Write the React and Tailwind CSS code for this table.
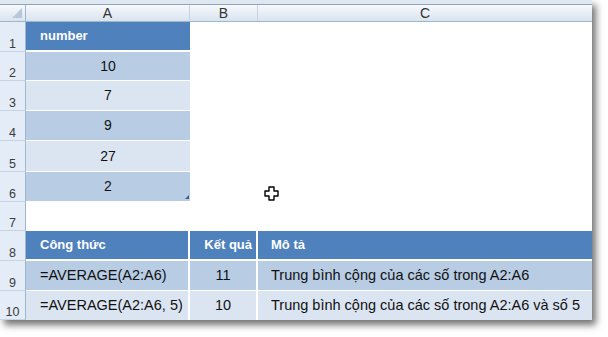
import React from "react";

const font = { fontFamily: '"Liberation Sans", Arial, sans-serif' };

const heights = [30, 29, 30, 30, 31, 30, 29, 30, 30, 29];

function RowHead({ n, h }) {
  return (
    <div
      className="flex items-end justify-center border-r border-b border-r-[#9eb6ce] border-b-[#c5d3e3] bg-[#e4ecf7] pb-[1px] text-[12.5px] leading-none text-[#3b3b3b]"
      style={{ height: h }}
    >
      {n}
    </div>
  );
}

export default function App() {
  const dark = "bg-[#b8cce4]";
  const light = "bg-[#dbe5f1]";
  const vals = ["10", "7", "9", "27", "2"];
  return (
    <div className="relative h-[337px] w-[608px] bg-white" style={font}>
      <div className="w-[592px] bg-white shadow-[4px_5px_7px_rgba(0,0,0,0.55)]">
        {/* top strip */}
        <div className="h-[4px] bg-[#dfe7f0]" />
        <div className="h-[1px] bg-[#8ea4bd]" />
        {/* column headers */}
        <div className="grid h-[17px] grid-cols-[26px_164px_68px_334px] border-b border-[#9eb6ce] bg-gradient-to-b from-[#f6f9fc] to-[#dae3ee] text-[14px] leading-none text-[#333]">
          <div className="relative border-r border-[#9eb6ce]">
            <svg className="absolute right-[3px] bottom-[3px]" width="10" height="10" viewBox="0 0 10 10">
              <polygon points="10,0 10,10 0,10" fill="#b7c7d9" />
            </svg>
          </div>
          <div className="flex items-center justify-center border-r border-[#c5d3e3]">A</div>
          <div className="flex items-center justify-center border-r border-[#c5d3e3]">B</div>
          <div className="flex items-center justify-center">C</div>
        </div>
        {/* body */}
        <div className="grid grid-cols-[26px_164px_68px_334px]">
          {/* row 1 */}
          <RowHead n={1} h={heights[0]} />
          <div className="flex items-center border-b-2 border-white bg-[#4f81bd] pl-[14px] text-[13px] font-bold text-white">
            number
          </div>
          <div />
          <div />
          {vals.map((v, i) => (
            <React.Fragment key={i}>
              <RowHead n={i + 2} h={heights[i + 1]} />
              <div
                className={`relative flex items-center justify-center border-b border-white text-[14px] text-[#111] ${
                  i % 2 === 0 ? dark : light
                }`}
              >
                {v}
                {i === 4 && (
                  <svg className="absolute right-[1px] bottom-[2px]" width="4" height="4" viewBox="0 0 4 4">
                    <polygon points="4,0 4,4 0,4" fill="#3f5f8f" />
                  </svg>
                )}
              </div>
              <div />
              <div />
            </React.Fragment>
          ))}
          {/* row 7 */}
          <RowHead n={7} h={heights[6]} />
          <div />
          <div />
          <div />
          {/* row 8 */}
          <RowHead n={8} h={heights[7]} />
          <div className="flex items-center border-r-2 border-b-2 border-white bg-[#4f81bd] pl-[14px] text-[13px] font-bold text-white">
            Công thức
          </div>
          <div className="flex items-center justify-end border-r-2 border-b-2 border-white bg-[#4f81bd] pr-[4px] text-[13px] font-bold text-white">
            Kết quả
          </div>
          <div className="flex items-center border-b-2 border-white bg-[#4f81bd] pl-[13px] text-[13px] font-bold text-white">
            Mô tả
          </div>
          {/* row 9 */}
          <RowHead n={9} h={heights[8]} />
          <div className={`flex items-center border-r-2 border-b border-white ${dark} pl-[14px] text-[14.5px] text-[#111]`}>
            =AVERAGE(A2:A6)
          </div>
          <div className={`flex items-center justify-center border-r-2 border-b border-white ${dark} text-[14.5px] text-[#111]`}>
            11
          </div>
          <div className={`flex items-center border-b border-white ${dark} pl-[13px] text-[14.5px] text-[#111]`}>
            Trung bình cộng của các số trong A2:A6
          </div>
          {/* row 10 */}
          <RowHead n={10} h={heights[9]} />
          <div className={`flex items-center border-r-2 border-white ${light} pl-[14px] text-[14.5px] text-[#111]`}>
            =AVERAGE(A2:A6, 5)
          </div>
          <div className={`flex items-center justify-center border-r-2 border-white ${light} text-[14.5px] text-[#111]`}>
            10
          </div>
          <div className={`flex items-center ${light} pl-[13px] text-[14.5px] text-[#111]`}>
            Trung bình cộng của các số trong A2:A6 và số 5
          </div>
        </div>
      </div>
      {/* cursor */}
      <svg className="absolute left-[264px] top-[186px]" width="15" height="15" viewBox="0 0 15 15">
        <path
          d="M5 1 H10 V5 H14 V10 H10 V14 H5 V10 H1 V5 H5 Z"
          fill="#fff"
          stroke="#000"
          strokeWidth="1.4"
          strokeLinejoin="round"
        />
      </svg>
    </div>
  );
}
